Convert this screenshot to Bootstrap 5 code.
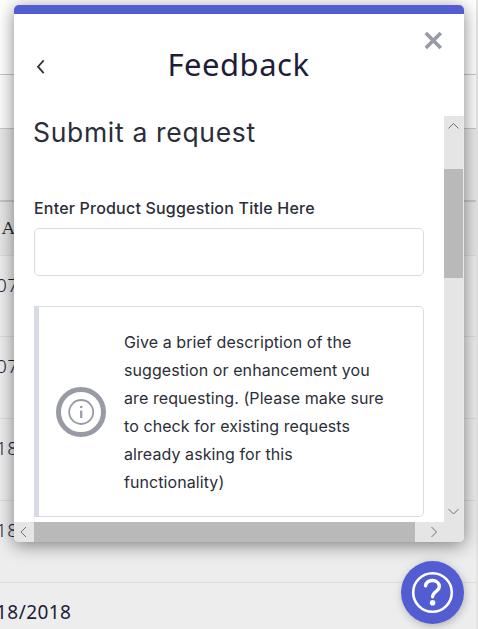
<!DOCTYPE html>
<html lang="en">
<head>
<meta charset="utf-8">
<meta name="viewport" content="width=device-width, initial-scale=1">
<title>Feedback</title>
<link href="https://cdn.jsdelivr.net/npm/bootstrap@5.3.0/dist/css/bootstrap.min.css" rel="stylesheet">
<style>
body{font-family:Inter,"Liberation Sans",sans-serif;color:#2b2e38;background:#ededed}
.page-shell{height:629px;border-right:2px solid #e3e3e3}
.page-shell>div{white-space:nowrap;flex:none}
.top-a{height:75px;background:#fff;border-bottom:1px solid #c5c6d2}
.top-b{height:54px;background:#fcfcfc;border-bottom:1px solid #c5c6d2}
.top-c{height:73px;background:#e8e8e8;border-bottom:2px solid #c4c5d0}
.head-row{height:54px;background:#e6e6e6;border-bottom:1px solid #d9dbe5;font:17.5px "DejaVu Serif",serif;padding:0 0 1px 2px}
.date-row{height:82px;border-bottom:1px solid #dbdce6;font:300 19px/27px "Noto Sans",sans-serif;color:#1c1c38}
.date-row.short-row{height:81px}
.date-row span{display:block;margin-left:-4px;letter-spacing:.45px}
.date-row:last-child span{font-weight:400;line-height:26px}
.feedback-panel{left:14px;top:5px;width:450px;height:537px;border-top:9px solid #535dd2;border-radius:5px;box-shadow:0 3px 18px rgba(0,0,0,.48)}
.panel-head{height:102px;flex:none;padding:17px 20px 0 21px}
.panel-head h1{font:31px/67px "Noto Sans",sans-serif;color:#1e1e38;letter-spacing:.5px;padding-left:7px}
.panel-head svg{display:block}
.back-btn{width:11px;padding-top:28px;height:60px}
.close-btn{width:20px;height:20px}
.content-pane{width:430px;height:406px;padding:0 20px 5px}
.content-pane h2{font-size:26.5px;line-height:32px;font-weight:400;margin:0 0 0 -1px;padding-bottom:2px;letter-spacing:.68px}
.field-label{font:500 16px/24px Inter,sans-serif;letter-spacing:.2px;margin-top:46px;white-space:nowrap}
.title-input{height:48px;border:1px solid #d8dae6;border-radius:5px;margin-top:8px;padding:0 12px;background:#fff}
.note{height:211px;border:1px solid #d8dae6;border-left:5px solid #d8dae6;border-radius:0 5px 5px 0;margin-top:30px;padding-left:17px}
.note-text{font-size:16px;line-height:28px;letter-spacing:.08px;margin:0 0 0 18px;white-space:nowrap}
.bar-v{width:20px;background:#e5e5e5;border-right:1px solid #e9e9e9}
.bar-v .thumb-v{height:109px;background:#b9b9b9}
.bar-h{height:20px;background:#e5e5e5}
.bar-h .thumb-h{width:381px;background:#b9b9b9}
.help-btn{left:401px;top:561px;width:63px;height:63px;background:#535dd2;box-shadow:1px 2px 8px rgba(0,0,0,.25)}
</style>
<script src="https://cdn.jsdelivr.net/npm/bootstrap@5.3.0/dist/js/bootstrap.bundle.min.js"></script>
</head>
<body class="overflow-hidden">
<div class="page-shell d-flex flex-column overflow-hidden">
  <div class="top-a"></div><div class="top-b"></div><div class="top-c"></div>
  <div class="head-row d-flex align-items-center">A</div>
  <div class="date-row pt-3 short-row"><span>07</span></div>
  <div class="date-row pt-3"><span>07</span></div>
  <div class="date-row pt-3"><span>18</span></div>
  <div class="date-row pt-3"><span>18</span></div>
  <div class="date-row pt-3"><span>18/2018</span></div>
</div>

<section class="feedback-panel position-absolute bg-white overflow-hidden d-flex flex-column">
  <header class="panel-head d-flex justify-content-between">
    <div class="back-btn" role="button" aria-label="Back"><svg width="11" height="16" viewBox="0 0 11 16" fill="none" stroke="#33343a" stroke-width="1.8"><path d="M8.7 1.3 3 7.7 8.7 14.1"/></svg></div>
    <h1 class="m-0">Feedback</h1>
    <div class="close-btn" role="button" aria-label="Close"><svg width="20" height="20" viewBox="0 0 20 20" fill="none" stroke="#989ba6" stroke-width="3.6"><path d="M1.8 2 16.8 17M16.8 2 1.8 17"/></svg></div>
  </header>
  <div class="d-flex">
    <main class="content-pane">
      <h2>Submit a request</h2>
      <label class="field-label d-block" for="title">Enter Product Suggestion Title Here</label>
      <input id="title" class="title-input d-block w-100" type="text">
      <div class="note d-flex align-items-center">
        <svg class="flex-shrink-0" width="50" height="50" viewBox="0 0 50 50" fill="none" stroke="#989ba6"><circle cx="25" cy="25" r="22.5" stroke-width="5"/><circle cx="25.2" cy="25" r="12" stroke-width="1.8"/><path d="M25.2 23.5V31" stroke-width="2.2"/><circle cx="25.2" cy="20" r="1.3" fill="#989ba6" stroke="none"/></svg>
        <p class="note-text">Give a brief description of the<br>suggestion or enhancement you<br>are requesting. (Please make sure<br>to check for existing requests<br>already asking for this<br>functionality)</p>
      </div>
    </main>
    <div class="bar-v d-flex flex-column">
      <svg width="20" height="53" fill="none" stroke="#707070"><path d="M4.5 12.5 9.5 7.5 14.5 12.5"/></svg>
      <div class="thumb-v"></div>
      <svg class="mt-auto" width="20" height="20" fill="none" stroke="#707070"><path d="M4.5 7 9.5 12 14.5 7"/></svg>
    </div>
  </div>
  <div class="bar-h d-flex">
    <svg width="20" height="20" fill="none" stroke="#707070"><path d="M12 5 7 10 12 15"/></svg>
    <div class="thumb-h"></div>
    <svg width="49" height="20" fill="none" stroke="#707070"><path d="M16.5 5 21.5 10 16.5 15"/></svg>
  </div>
</section>

<div class="help-btn position-absolute rounded-circle d-flex align-items-center justify-content-center" role="button" aria-label="Help">
  <svg width="43" height="43" viewBox="0 0 43 43" fill="none" stroke="#fff"><circle cx="21.5" cy="21.5" r="19.3" stroke-width="2.6"/><path d="M14.5 14.8C15.2 11.3 17.8 9.5 21.3 9.5 25.4 9.5 28.3 12 28.3 15.6 28.3 20.4 21.6 20.6 21.6 25.8" stroke-width="3.4" stroke-linecap="round"/><circle cx="21.6" cy="31.8" r="2.8" fill="#fff" stroke="none"/></svg>
</div>
</body>
</html>
